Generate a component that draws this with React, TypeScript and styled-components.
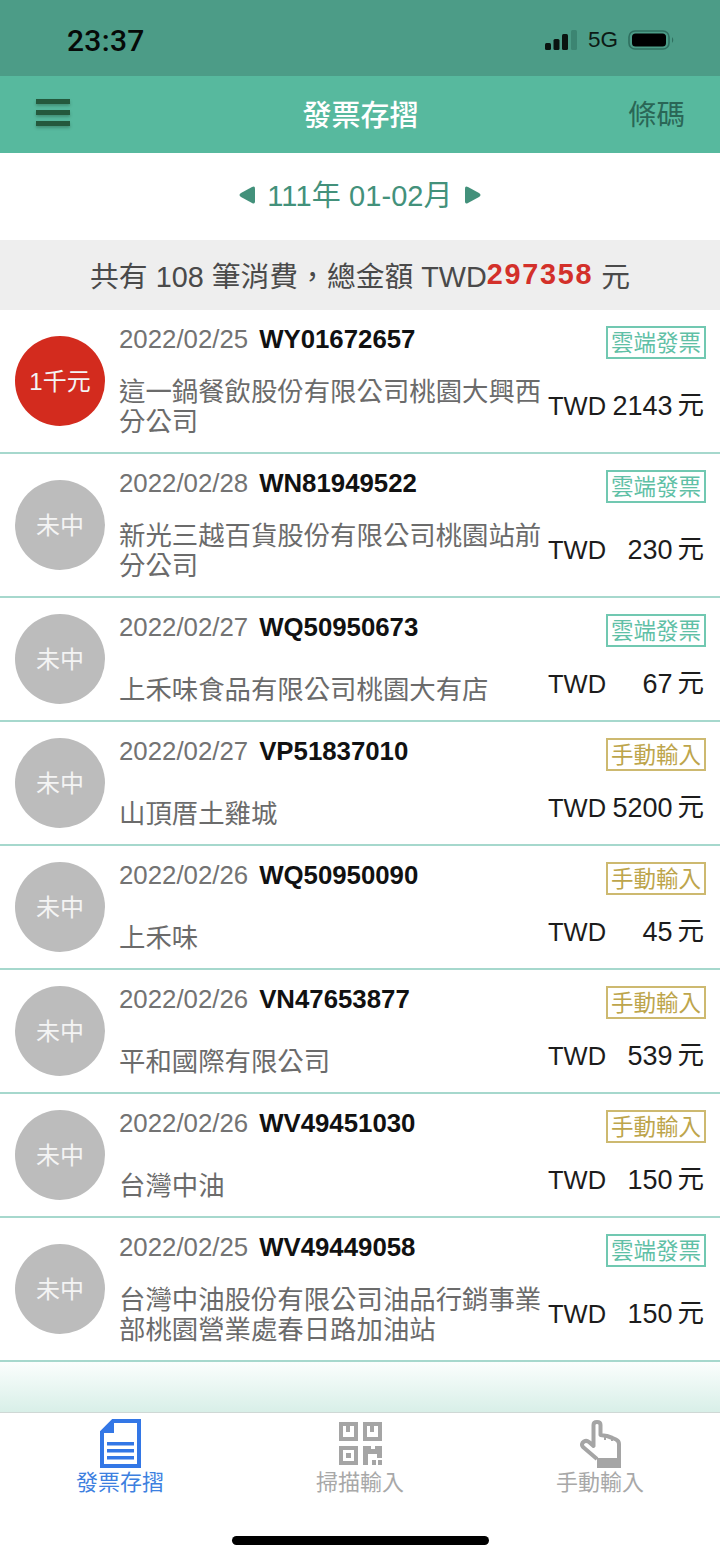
import React from 'react';
import styled, { createGlobalStyle } from 'styled-components';

const GlobalStyle = createGlobalStyle`
  html, body {
    margin: 0;
    padding: 0;
    background: #fff;
    font-family: "Liberation Sans", "Noto Sans CJK TC", sans-serif;
  }
  * { box-sizing: border-box; }
`;

const Page = styled.div`
  width: 720px;
  height: 1557px;
  display: flex;
  flex-direction: column;
  overflow: hidden;
  background: #fff;
`;

const StatusBar = styled.div`
  height: 76px;
  flex: none;
  background: #4c9c87;
  display: flex;
  align-items: center;
  justify-content: space-between;
  padding: 4px 45px 0 67px;
`;

const Clock = styled.span`
  font-family: Roboto, "Liberation Sans", sans-serif;
  font-size: 30px;
  font-weight: 500;
  letter-spacing: 0.3px;
  color: #060a08;
`;

const StatusIcons = styled.div`
  display: flex;
  align-items: center;
  gap: 10px;
`;

const NetworkLabel = styled.span`
  font-size: 22.5px;
  line-height: 24px;
  color: #0c1a15;
`;

const NavBar = styled.div`
  height: 77px;
  flex: none;
  background: #57b99e;
  display: grid;
  grid-template-columns: 1fr auto 1fr;
  align-items: center;
  padding: 0 35px 4px 36px;
`;

const MenuButton = styled.div`
  display: flex;
  flex-direction: column;
  gap: 6px;
  width: 34px;
`;

const MenuBar = styled.span`
  display: block;
  height: 5px;
  background: #24593d;
  box-shadow: 0 2px 3px rgba(30, 70, 50, 0.35);
`;

const NavTitle = styled.div`
  font-size: 29px;
  font-weight: 500;
  color: #fff;
`;

const NavAction = styled.div`
  justify-self: end;
  font-size: 28.5px;
  color: #2a6656;
`;

const MonthBar = styled.div`
  height: 87px;
  flex: none;
  display: flex;
  align-items: center;
  justify-content: center;
  gap: 11px;
  padding-bottom: 4px;
`;

const MonthLabel = styled.span`
  font-size: 29px;
  letter-spacing: 0.1px;
  margin-bottom: 4px;
  color: #43917b;
`;

const Summary = styled.div`
  height: 70px;
  flex: none;
  background: #eeeeee;
  display: flex;
  align-items: center;
  justify-content: center;
  padding-bottom: 2px;
  font-size: 28.8px;
  color: #4a4a4a;
  white-space: pre;
`;

const SummaryTotal = styled.span`
  font-weight: 700;
  letter-spacing: 1.7px;
  color: #d3302a;
`;

const InvoiceList = styled.div`
  flex: none;
`;

const Row = styled.div`
  display: flex;
  align-items: center;
  gap: 14px;
  padding: 16px 14px 15px 15px;
  border-bottom: 2px solid #a6d8cd;
`;

const Badge = styled.div<{ $won: boolean }>`
  flex: none;
  width: 90px;
  height: 90px;
  margin-top: -2px;
  padding-bottom: 2px;
  border-radius: 50%;
  display: flex;
  align-items: center;
  justify-content: center;
  font-size: 24px;
  color: #f4f4f4;
  background: ${(p) => (p.$won ? '#d32b1e' : '#bcbcbc')};
`;

const RowBody = styled.div`
  flex: 1;
  min-width: 0;
  display: flex;
  flex-direction: column;
`;

const TopLine = styled.div`
  height: 51px;
  display: flex;
  align-items: flex-start;
  justify-content: space-between;
`;

const DateLine = styled.div`
  display: flex;
  align-items: center;
  gap: 11px;
  height: 26px;
`;

const DateText = styled.span`
  font-size: 25.8px;
  color: #737373;
`;

const Code = styled.span`
  font-size: 25.8px;
  font-weight: 700;
  color: #111;
`;

const Tag = styled.div<{ $manual: boolean }>`
  width: 100px;
  height: 33px;
  padding-bottom: 3px;
  display: flex;
  align-items: center;
  justify-content: center;
  font-size: 22.5px;
  white-space: nowrap;
  border: 2px solid ${(p) => (p.$manual ? '#cdb970' : '#71c8b1')};
  color: ${(p) => (p.$manual ? '#bda54c' : '#5fc0a6')};
`;

const BottomLine = styled.div`
  min-height: 40px;
  display: flex;
  align-items: center;
`;

const ShopName = styled.div`
  flex: 0 0 429px;
  align-self: flex-end;
  font-size: 26.4px;
  line-height: 30px;
  color: #6b6b6b;
`;

const Amount = styled.div`
  flex: 1;
  display: flex;
  align-items: center;
  padding: 0 2px 2px 0;
  line-height: 30px;
  color: #1c1c1c;
`;

const Currency = styled.span`
  font-size: 25.5px;
  margin-right: auto;
`;

const Value = styled.span`
  font-size: 27px;
  margin-right: 1px;
`;

const Unit = styled.span`
  font-size: 26.5px;
  margin-left: 4px;
  margin-bottom: 2px;
`;

const Fade = styled.div`
  height: 51px;
  flex: none;
  background: linear-gradient(#fbfefd, #d8efe8);
  border-bottom: 1px solid #cfd8d5;
`;

const TabBar = styled.div`
  flex: 1;
  display: flex;
  flex-direction: column;
  align-items: center;
  background: #fff;
`;

const Tabs = styled.div`
  width: 100%;
  display: grid;
  grid-template-columns: repeat(3, 1fr);
  padding-top: 4px;
`;

const Tab = styled.div<{ $active: boolean }>`
  display: flex;
  flex-direction: column;
  align-items: center;
  font-size: 22px;
  line-height: 26px;
  color: ${(p) => (p.$active ? '#3d80df' : '#a8a8a8')};
`;

const TabIcon = styled.div`
  height: 53px;
  display: flex;
  align-items: center;
  justify-content: center;
`;

const HomeIndicator = styled.div`
  width: 257px;
  height: 9px;
  margin-top: 40px;
  border-radius: 5px;
  background: #000;
`;

const CaretLeft = () => (
  <svg width="17" height="18" viewBox="0 0 17 18">
    <path d="M16 2.5 V15.5 Q16 18.5 13 17 L2 11 Q-1 9 2 7 L13 1 Q16 -0.5 16 2.5 Z" fill="#43917b" />
  </svg>
);

const CaretRight = () => (
  <svg width="17" height="18" viewBox="0 0 17 18">
    <path d="M1 2.5 V15.5 Q1 18.5 4 17 L15 11 Q18 9 15 7 L4 1 Q1 -0.5 1 2.5 Z" fill="#43917b" />
  </svg>
);

const SignalIcon = () => (
  <svg width="33" height="20" viewBox="0 0 33 20">
    <rect x="0" y="13" width="6" height="7" rx="1.5" fill="#0a1410" />
    <rect x="8.5" y="9" width="6" height="11" rx="1.5" fill="#0a1410" />
    <rect x="17" y="4" width="6" height="16" rx="1.5" fill="#0a1410" />
    <rect x="26" y="0" width="6" height="20" rx="1.5" fill="#3c8572" />
  </svg>
);

const BatteryIcon = () => (
  <svg width="47" height="20" viewBox="0 0 47 20">
    <rect x="1" y="1" width="40" height="18" rx="6" fill="none" stroke="#2f6f5f" strokeWidth="1.6" />
    <rect x="4" y="3.5" width="34" height="13" rx="3.5" fill="#000" />
    <path d="M44 7 Q46.5 10 44 13 Z" fill="#2f6f5f" />
  </svg>
);

const DocumentIcon = () => (
  <svg width="41" height="49" viewBox="0 0 41 49">
    <path d="M13 2 H39 V47 H2 V13 Z" fill="#fff" stroke="#3377e6" strokeWidth="4" />
    <path d="M14 0 V14 H0 Z" fill="#3377e6" />
    <rect x="7" y="23" width="27" height="3.5" fill="#3377e6" />
    <rect x="7" y="30" width="27" height="3.5" fill="#3377e6" />
    <rect x="7" y="37" width="27" height="3.5" fill="#3377e6" />
  </svg>
);

const QrIcon = () => (
  <svg width="43" height="43" viewBox="0 0 43 43" fill="#a5a5a5">
    <path fillRule="evenodd" d="M0 0H19V19H0Z M4 4V15H15V4Z" />
    <rect x="7" y="4" width="4" height="6" />
    <path fillRule="evenodd" d="M24 0H43V19H24Z M28 4V15H39V4Z" />
    <rect x="31" y="4" width="4" height="6" />
    <path fillRule="evenodd" d="M0 24H19V43H0Z M4 28V39H15V28Z" />
    <rect x="7" y="31" width="5" height="5" />
    <path d="M24 24H32V27H36V24H43V36H38V32H29V43H24Z" />
    <rect x="33" y="38" width="4" height="5" />
    <rect x="39" y="38" width="4" height="5" />
  </svg>
);

const HandIcon = () => (
  <svg width="41" height="48" viewBox="0 0 41 48">
    <path
      d="M17 39 L3 27 Q0.5 24 4 21.5 Q6.5 20 9 22 L13.5 26 V5 Q13.5 2 17 2 Q20.5 2 20.5 5 V15 L27 16 L32.5 18 L36 19.5 Q39 21 39 24 V39"
      fill="none"
      stroke="#a5a5a5"
      strokeWidth="4"
      strokeLinejoin="round"
    />
    <path d="M25 15 V20 M32 17 V21" stroke="#a5a5a5" strokeWidth="2" />
    <rect x="17" y="38" width="24" height="10" fill="#a5a5a5" />
  </svg>
);

type Invoice = {
  date: string;
  code: string;
  shop: string;
  amount: number;
  manual: boolean;
  prize: string;
};

const invoices: Invoice[] = [
  { date: '2022/02/25', code: 'WY01672657', shop: '這一鍋餐飲股份有限公司桃園大興西分公司', amount: 2143, manual: false, prize: '1千元' },
  { date: '2022/02/28', code: 'WN81949522', shop: '新光三越百貨股份有限公司桃園站前分公司', amount: 230, manual: false, prize: '未中' },
  { date: '2022/02/27', code: 'WQ50950673', shop: '上禾味食品有限公司桃園大有店', amount: 67, manual: false, prize: '未中' },
  { date: '2022/02/27', code: 'VP51837010', shop: '山頂厝土雞城', amount: 5200, manual: true, prize: '未中' },
  { date: '2022/02/26', code: 'WQ50950090', shop: '上禾味', amount: 45, manual: true, prize: '未中' },
  { date: '2022/02/26', code: 'VN47653877', shop: '平和國際有限公司', amount: 539, manual: true, prize: '未中' },
  { date: '2022/02/26', code: 'WV49451030', shop: '台灣中油', amount: 150, manual: true, prize: '未中' },
  { date: '2022/02/25', code: 'WV49449058', shop: '台灣中油股份有限公司油品行銷事業部桃園營業處春日路加油站', amount: 150, manual: false, prize: '未中' },
];

const App: React.FC = () => {
  return (
    <Page>
      <GlobalStyle />
      <StatusBar>
        <Clock>23:37</Clock>
        <StatusIcons>
          <SignalIcon />
          <NetworkLabel>5G</NetworkLabel>
          <BatteryIcon />
        </StatusIcons>
      </StatusBar>
      <NavBar>
        <MenuButton>
          <MenuBar />
          <MenuBar />
          <MenuBar />
        </MenuButton>
        <NavTitle>發票存摺</NavTitle>
        <NavAction>條碼</NavAction>
      </NavBar>
      <MonthBar>
        <CaretLeft />
        <MonthLabel>111年 01-02月</MonthLabel>
        <CaretRight />
      </MonthBar>
      <Summary>
        {'共有 108 筆消費\uFF0C總金額 TWD'}<SummaryTotal>297358</SummaryTotal>{' 元'}
      </Summary>
      <InvoiceList>
        {invoices.map((item) => (
          <Row key={item.code}>
            <Badge $won={item.prize !== '未中'}>{item.prize}</Badge>
            <RowBody>
              <TopLine>
                <DateLine>
                  <DateText>{item.date}</DateText>
                  <Code>{item.code}</Code>
                </DateLine>
                <Tag $manual={item.manual}>{item.manual ? '手動輸入' : '雲端發票'}</Tag>
              </TopLine>
              <BottomLine>
                <ShopName>{item.shop}</ShopName>
                <Amount>
                  <Currency>TWD</Currency>
                  <Value>{item.amount}</Value>
                  <Unit>元</Unit>
                </Amount>
              </BottomLine>
            </RowBody>
          </Row>
        ))}
      </InvoiceList>
      <Fade />
      <TabBar>
        <Tabs>
          <Tab $active>
            <TabIcon><DocumentIcon /></TabIcon>
            發票存摺
          </Tab>
          <Tab $active={false}>
            <TabIcon><QrIcon /></TabIcon>
            掃描輸入
          </Tab>
          <Tab $active={false}>
            <TabIcon><HandIcon /></TabIcon>
            手動輸入
          </Tab>
        </Tabs>
        <HomeIndicator />
      </TabBar>
    </Page>
  );
};

export default App;
